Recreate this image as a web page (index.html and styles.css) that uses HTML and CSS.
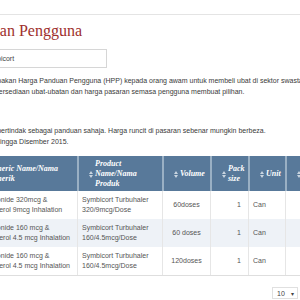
FILE: index.html
```html
<!DOCTYPE html>
<html>
<head>
<meta charset="utf-8">
<link rel="stylesheet" href="styles.css">
</head>
<body>
<div class="topbar"></div>
<div class="page">
  <h1 class="title">Harga Panduan Pengguna</h1>
  <input class="search" type="text" value="Symbicort">
  <p class="intro">Ini merupakan Harga Panduan Pengguna (HPP) kepada orang awam untuk membeli ubat di sektor swasta.<br>serta ketersediaan ubat-ubatan dan harga pasaran semasa pengguna membuat pilihan.</p>
  <p class="note">HPP ini bertindak sebagai panduan sahaja. Harga runcit di pasaran sebenar mungkin berbeza.<br>Data sehingga Disember 2015.</p>
  <table class="grid">
    <colgroup>
      <col class="c-gen"><col class="c-prod"><col class="c-vol"><col class="c-pack"><col class="c-unit"><col class="c-price">
    </colgroup>
    <thead>
      <tr>
        <th><span class="sort"><svg viewBox="0 0 4 7" width="4" height="7"><path d="M0 3L2 0L4 3Z M0 4L2 7L4 4Z"/></svg></span>Generic Name/Nama Generik</th>
        <th><span class="sort"><svg viewBox="0 0 4 7" width="4" height="7"><path d="M0 3L2 0L4 3Z M0 4L2 7L4 4Z"/></svg></span>Product Name/Nama Produk</th>
        <th><span class="sort"><svg viewBox="0 0 4 7" width="4" height="7"><path d="M0 3L2 0L4 3Z M0 4L2 7L4 4Z"/></svg></span>Volume</th>
        <th><span class="sort"><svg viewBox="0 0 4 7" width="4" height="7"><path d="M0 3L2 0L4 3Z M0 4L2 7L4 4Z"/></svg></span>Pack size</th>
        <th><span class="sort"><svg viewBox="0 0 4 7" width="4" height="7"><path d="M0 3L2 0L4 3Z M0 4L2 7L4 4Z"/></svg></span>Unit</th>
        <th><span class="sort"><svg viewBox="0 0 4 7" width="4" height="7"><path d="M0 3L2 0L4 3Z M0 4L2 7L4 4Z"/></svg></span>Price/Harga (RM)</th>
      </tr>
    </thead>
    <tbody>
      <tr>
        <td>Budesonide 320mcg &amp;<br>Formoterol 9mcg Inhalation</td>
        <td>Symbicort Turbuhaler 320/9mcg/Dose</td>
        <td class="center">60doses</td>
        <td class="right">1</td>
        <td>Can</td>
        <td class="right">165.00</td>
      </tr>
      <tr class="alt">
        <td>Budesonide 160 mcg &amp;<br>Formoterol 4.5 mcg Inhalation</td>
        <td>Symbicort Turbuhaler 160/4.5mcg/Dose</td>
        <td class="center">60 doses</td>
        <td class="right">1</td>
        <td>Can</td>
        <td class="right">98.00</td>
      </tr>
      <tr>
        <td>Budesonide 160 mcg &amp;<br>Formoterol 4.5 mcg Inhalation</td>
        <td>Symbicort Turbuhaler 160/4.5mcg/Dose</td>
        <td class="center">120doses</td>
        <td class="right">1</td>
        <td>Can</td>
        <td class="right">175.00</td>
      </tr>
    </tbody>
  </table>
  <div class="footer">
    <div class="pager">10 <span class="caret">&#9662;</span></div>
  </div>
</div>
</body>
</html>
```
FILE: styles.css
```css
html, body {
  margin: 0;
  padding: 0;
  overflow: hidden;
  background: #ffffff;
}
body {
  width: 300px;
  height: 300px;
  font-family: "Liberation Sans", Arial, sans-serif;
  font-size: 7px;
  color: #444;
}
.topbar {
  height: 14px;
  border-bottom: 1px solid #e4e4e4;
}
.page {
  margin-left: -28px;
  width: 328px;
}
.title {
  margin: 7px 0 0 -55px;
  font-family: "Liberation Serif", "Times New Roman", serif;
  font-weight: normal;
  font-size: 16px;
  line-height: 18px;
  color: #9e2f2c;
  white-space: nowrap;
}
.search {
  display: block;
  box-sizing: border-box;
  margin: 9px 0 0 0;
  width: 135px;
  height: 19px;
  padding: 0 10px;
  border: 1px solid #d6d6d6;
  font-family: "Liberation Sans", Arial, sans-serif;
  font-size: 7px;
  color: #444;
  background: #fff;
}
.intro, .note {
  margin: 0;
  line-height: 10.5px;
  white-space: nowrap;
  color: #3a3a3a;
}
.intro { margin-top: 8px; }
.note { margin-top: 29px; }
.grid {
  margin-top: 9px;
  table-layout: fixed;
  width: 394px;
  border-collapse: separate;
  border-spacing: 0;
  border-bottom: 1px solid #dedede;
}
.c-gen { width: 106px; }
.c-prod { width: 85px; }
.c-vol { width: 48px; }
.c-pack { width: 38px; }
.c-unit { width: 37px; }
.c-price { width: 80px; }
.grid th {
  position: relative;
  background: #58799a;
  color: #ffffff;
  font-family: "Liberation Serif", "Times New Roman", serif;
  font-style: italic;
  font-weight: bold;
  font-size: 8px;
  line-height: 10px;
  text-align: left;
  vertical-align: middle;
  padding: 3px 4px 2px 16px;
  height: 30px;
  border-left: 1px solid #9ab0c4;
  border-right: 1px solid #9ab0c4;
}
.grid th:first-child { border-left: none; }
.sort {
  position: absolute;
  left: 10px;
  top: 50%;
  margin-top: -3px;
  width: 4px;
  height: 7px;
  display: block;
}
.sort svg { display: block; fill: #c9d5e0; }
.grid td {
  font-size: 7px;
  line-height: 10px;
  color: #555;
  padding: 4px 4px 4px 4px;
  height: 20px;
  vertical-align: middle;
  border-right: 1px solid #e6e6e6;
}
.grid td:first-child { padding-left: 5px; }
.grid tr.alt td { background: #eef2f7; }
.center { text-align: center; }
.right { text-align: right; padding-right: 7px !important; }
.footer {
  display: flex;
  justify-content: flex-end;
  padding-right: 2px;
  margin-top: 11px;
}
.pager {
  box-sizing: border-box;
  width: 26px;
  height: 12px;
  border: 1px solid #e0e0e0;
  display: flex;
  align-items: center;
  justify-content: space-between;
  padding: 0 3px 0 4px;
  font-size: 7px;
  color: #444;
}
.caret { font-size: 6px; }
```
